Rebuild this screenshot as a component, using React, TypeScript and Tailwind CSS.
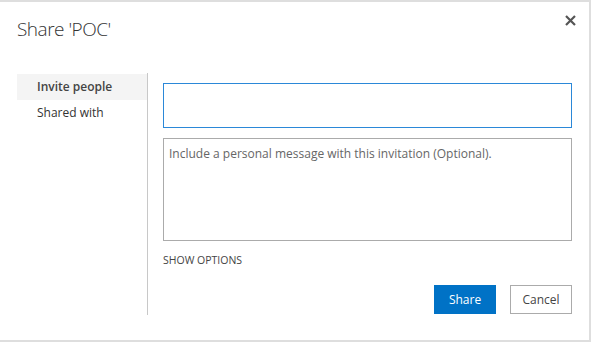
import React from "react";

const font = { fontFamily: '"Open Sans", "Noto Sans", "Liberation Sans", sans-serif' };

const NavItem = ({ label, active }: { label: string; active?: boolean }) => (
  <div
    className={`h-[26px] flex items-center pl-[20px] text-[12px] ${
      active ? "bg-[#f4f4f4] font-semibold text-[#444]" : "text-[#333]"
    }`}
  >
    {label}
  </div>
);

export default function App() {
  return (
    <div className="w-[592px] h-[343px] bg-white" style={font}>
      <div className="w-[591px] h-[342px] border-t-2 border-r-2 border-b-2 border-[#dedede] flex flex-col">
        <div className="flex items-start justify-between pl-[17px] pr-[13px] pt-[12px] h-[71px]">
          <h1 className="text-[19px] font-light text-[#333] leading-[30px] tracking-[-0.5px]">Share 'POC'</h1>
          <button className="mt-[1px]">
            <svg width="11" height="11" viewBox="0 0 11 11">
              <path d="M1 1 L10 10 M10 1 L1 10" stroke="#555" strokeWidth="2.2" />
            </svg>
          </button>
        </div>
        <div className="flex pl-[17px]">
          <div className="w-[131px] h-[242px] border-r border-[#c8c8c8] pt-[1px]">
            <NavItem label="Invite people" active />
            <NavItem label="Shared with" />
          </div>
          <div className="flex flex-col pl-[15px] pt-[10px] w-[424px]">
            <div className="h-[45px] bg-[#2b88d8] p-px">
              <div className="h-full bg-white" />
            </div>
            <div className="mt-[10px] h-[103px] border border-[#ababab] px-[5px] pt-[6px] text-[12px] text-[#666] leading-[18px]">
              Include a personal message with this invitation (Optional).
            </div>
            <div className="mt-[12px] text-[10.5px] text-[#444] leading-[14px]">SHOW OPTIONS</div>
            <div className="mt-[18px] flex justify-end gap-[14px]">
              <button className="w-[62px] h-[29px] bg-[#0072c6] text-white text-[12px]">Share</button>
              <button className="w-[62px] h-[29px] border border-[#ababab] text-[#444] text-[12px]">
                Cancel
              </button>
            </div>
          </div>
        </div>
      </div>
    </div>
  );
}
